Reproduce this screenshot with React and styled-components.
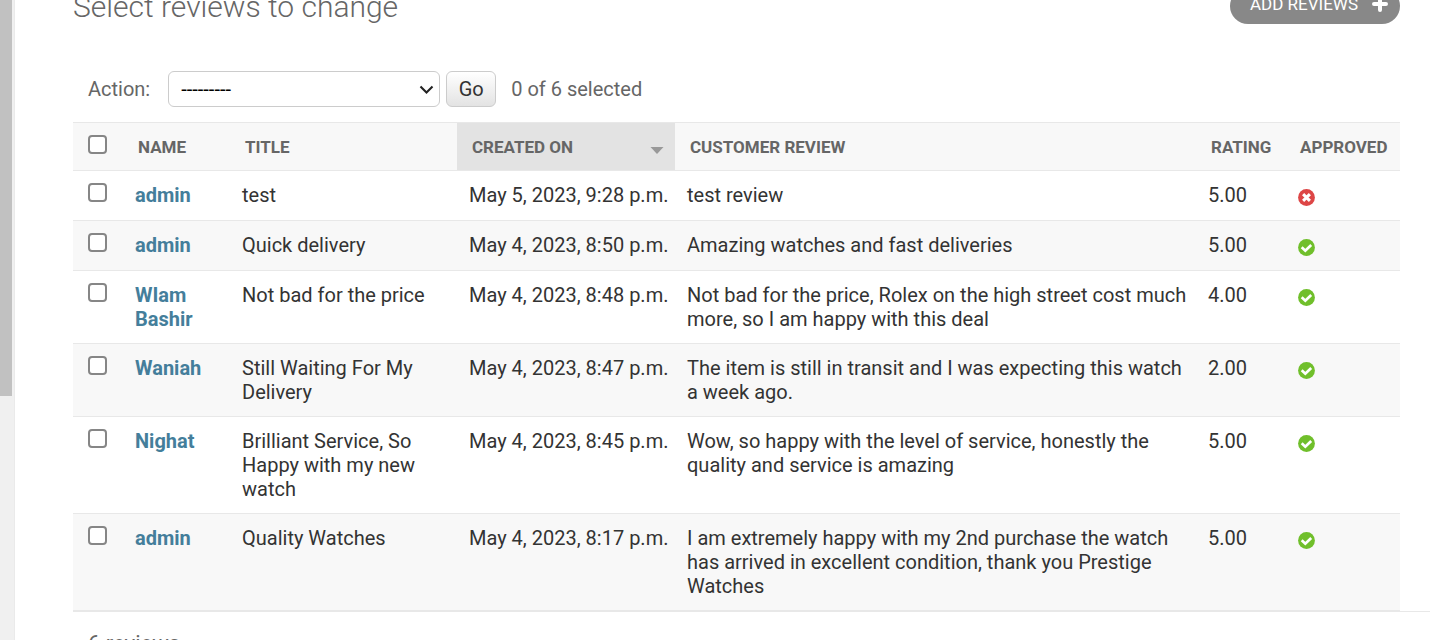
import React from "react";
import styled, { createGlobalStyle } from "styled-components";

const GlobalStyle = createGlobalStyle`
  *, *::before, *::after { box-sizing: border-box; }
  body {
    margin: 0;
    background: #fff;
    color: #333;
    font-family: Roboto, "Liberation Sans", sans-serif;
    font-size: 20px;
    line-height: 24px;
  }
`;

const Page = styled.div`
  display: flex;
  height: 100vh;
  overflow: hidden;
`;

const SidebarEdge = styled.aside`
  flex: none;
  width: 15px;
  background: #f0f0f0;
  border-right: 1px solid #eaeaea;
`;

const ScrollThumb = styled.div`
  width: 12px;
  height: 396px;
  background: #c1c1c1;
`;

const Main = styled.main`
  flex: 1;
  min-width: 0;
  margin-top: -12px;
  padding: 0 22px 0 58px;
`;

const Header = styled.header`
  display: flex;
  justify-content: space-between;
  align-items: flex-start;
  height: 68px;
  margin-right: 30px;
`;

const Title = styled.h1`
  margin: 0;
  font-size: 30px;
  line-height: 38px;
  font-weight: 300;
  color: #666;
`;

const AddLink = styled.a`
  display: flex;
  align-items: center;
  gap: 14px;
  height: 36px;
  padding: 0 12px 4px 20px;
  border-radius: 22px;
  background: #888;
  color: #fff;
  font-size: 17px;
  text-decoration: none;
  text-transform: uppercase;
  white-space: nowrap;
`;

const Actions = styled.div`
  display: flex;
  align-items: center;
  height: 66px;
  padding: 0 15px;
  color: #666;
`;

const ActionLabel = styled.label`
  display: flex;
  align-items: center;
  gap: 18px;
`;

const SelectBox = styled.span`
  display: grid;
  align-items: center;

  > * {
    grid-area: 1 / 1;
  }

  > svg {
    justify-self: end;
    margin-right: 6px;
    pointer-events: none;
  }
`;

const Select = styled.select`
  appearance: none;
  width: 272px;
  height: 36px;
  padding: 0 24px 0 12px;
  border: 1px solid #ccc;
  border-radius: 6px;
  background: #fff;
  color: #000;
  font: inherit;
`;

const GoButton = styled.button`
  width: 50px;
  height: 36px;
  margin: 0 15px 0 6px;
  padding: 0;
  border: 1px solid #ccc;
  border-radius: 6px;
  background: linear-gradient(#fff, #e3e3e3);
  color: #333;
  font: inherit;
`;

const Results = styled.div`
  margin-right: 30px;
`;

const Table = styled.table`
  width: 100%;
  table-layout: fixed;
  border-collapse: separate;
  border-spacing: 0;
`;

const Col = styled.col`
  width: ${(p) => (p.$width ? `${p.$width}px` : "auto")};
`;

const HeadCell = styled.th`
  height: 49px;
  padding: 0 15px;
  border-top: 1px solid #e8e8e8;
  border-bottom: 1px solid #e8e8e8;
  background: ${(p) => (p.$sorted ? "#e3e3e3" : "#f8f8f8")};
  color: #666;
  font-size: 17px;
  font-weight: 700;
  text-align: left;
  text-transform: uppercase;
  vertical-align: middle;
  white-space: nowrap;
`;

const HeadCheckCell = styled(HeadCell)`
  padding-top: 12px;
  vertical-align: top;
`;

const SortLabel = styled.span`
  display: flex;
  align-items: center;
  justify-content: space-between;
  margin-right: -4px;

  > svg {
    margin-top: 6px;
  }
`;

const Row = styled.tr`
  background: ${(p) => (p.$striped ? "#f8f8f8" : "#fff")};
`;

const Cell = styled.td`
  height: 50px;
  padding: 12px 6px 12px 12px;
  border-bottom: 1px solid #e8e8e8;
  text-align: left;
  vertical-align: top;
`;

const DateCell = styled(Cell)`
  white-space: nowrap;
`;

const CheckCell = styled(Cell)`
  padding: 12px 15px;
`;

const Check = styled.input`
  appearance: none;
  display: block;
  width: 19px;
  height: 19px;
  margin: 0;
  border: 2px solid #868686;
  border-radius: 4px;
  background: #fff;

  &:checked {
    border-color: #0075ff;
    background: #0075ff;
  }
`;

const NameCell = styled(Cell).attrs({ as: "th", scope: "row" })``;

const NameLink = styled.a`
  color: #447e9b;
  font-weight: 700;
  text-decoration: none;
`;

const StatusIcon = styled.svg`
  display: block;
  width: 19px;
  height: 19px;
  margin: 5px 0 0;
`;

const Paginator = styled.p`
  margin: 0;
  padding: 18px 15px;
  border-top: 1px solid #e8e8e8;
  color: #666;
  font-size: 22px;
  line-height: 28px;
`;

const reviews = [
  { name: "admin", title: "test", created: "May 5, 2023, 9:28 p.m.", text: "test review", rating: "5.00", approved: false },
  { name: "admin", title: "Quick delivery", created: "May 4, 2023, 8:50 p.m.", text: "Amazing watches and fast deliveries", rating: "5.00", approved: true },
  { name: "WIam Bashir", title: "Not bad for the price", created: "May 4, 2023, 8:48 p.m.", text: "Not bad for the price, Rolex on the high street cost much more, so I am happy with this deal", rating: "4.00", approved: true },
  { name: "Waniah", title: "Still Waiting For My Delivery", created: "May 4, 2023, 8:47 p.m.", text: "The item is still in transit and I was expecting this watch a week ago.", rating: "2.00", approved: true },
  { name: "Nighat", title: "Brilliant Service, So Happy with my new watch", created: "May 4, 2023, 8:45 p.m.", text: "Wow, so happy with the level of service, honestly the quality and service is amazing", rating: "5.00", approved: true },
  { name: "admin", title: "Quality Watches", created: "May 4, 2023, 8:17 p.m.", text: "I am extremely happy with my 2nd purchase the watch has arrived in excellent condition, thank you Prestige Watches", rating: "5.00", approved: true },
];

function Approved({ value }) {
  return (
    <StatusIcon viewBox="0 0 19 19" role="img" aria-label={value ? "True" : "False"}>
      <circle cx="9.5" cy="9.5" r="8.4" fill={value ? "#70bf2b" : "#dd4646"} />
      {value ? (
        <path d="M4.7 9.3 L8.3 12.7 L14.2 7" fill="none" stroke="#fff" strokeWidth="2.7" />
      ) : (
        <path d="M6.1 6.1 L12.9 12.9 M12.9 6.1 L6.1 12.9" fill="none" stroke="#fff" strokeWidth="3" />
      )}
    </StatusIcon>
  );
}

export default function App() {
  return (
    <>
      <GlobalStyle />
      <Page>
        <SidebarEdge>
          <ScrollThumb />
        </SidebarEdge>
        <Main>
          <Header>
            <Title>Select reviews to change</Title>
            <AddLink href="#add">
              Add reviews
              <svg width="16" height="16" viewBox="0 0 16 16" aria-hidden="true">
                <path d="M8 2 V14 M2 8 H14" stroke="#fff" strokeWidth="4" strokeLinecap="round" />
              </svg>
            </AddLink>
          </Header>
          <Actions>
            <ActionLabel>
              Action:
              <SelectBox>
                <Select defaultValue="">
                  <option value="">---------</option>
                  <option value="delete">Delete selected reviews</option>
                </Select>
                <svg width="15" height="9" viewBox="0 0 15 9" aria-hidden="true">
                  <path d="M1.5 1.5 L7.5 7.5 L13.5 1.5" fill="none" stroke="#222" strokeWidth="2.1" />
                </svg>
              </SelectBox>
            </ActionLabel>
            <GoButton type="button">Go</GoButton>
            <span>0 of 6 selected</span>
          </Actions>
          <Results>
            <Table>
              <colgroup>
                <Col $width={50} />
                <Col $width={107} />
                <Col $width={227} />
                <Col $width={218} />
                <Col />
                <Col $width={89} />
                <Col $width={115} />
              </colgroup>
              <thead>
                <tr>
                  <HeadCheckCell scope="col">
                    <Check type="checkbox" aria-label="Select all reviews" />
                  </HeadCheckCell>
                  <HeadCell scope="col">Name</HeadCell>
                  <HeadCell scope="col">Title</HeadCell>
                  <HeadCell scope="col" $sorted aria-sort="descending">
                    <SortLabel>
                      Created on
                      <svg width="14" height="8" viewBox="0 0 14 8" aria-hidden="true">
                        <path d="M0.5 1 H13.5 L7 8 Z" fill="#999" />
                      </svg>
                    </SortLabel>
                  </HeadCell>
                  <HeadCell scope="col">Customer review</HeadCell>
                  <HeadCell scope="col">Rating</HeadCell>
                  <HeadCell scope="col">Approved</HeadCell>
                </tr>
              </thead>
              <tbody>
                {reviews.map((r, i) => (
                  <Row key={r.created} $striped={i % 2 === 1}>
                    <CheckCell>
                      <Check type="checkbox" aria-label={`Select ${r.title}`} />
                    </CheckCell>
                    <NameCell>
                      <NameLink href={`#review-${i + 1}`}>{r.name}</NameLink>
                    </NameCell>
                    <Cell>{r.title}</Cell>
                    <DateCell>{r.created}</DateCell>
                    <Cell>{r.text}</Cell>
                    <Cell>{r.rating}</Cell>
                    <Cell>
                      <Approved value={r.approved} />
                    </Cell>
                  </Row>
                ))}
              </tbody>
            </Table>
          </Results>
          <Paginator>6 reviews</Paginator>
        </Main>
      </Page>
    </>
  );
}
